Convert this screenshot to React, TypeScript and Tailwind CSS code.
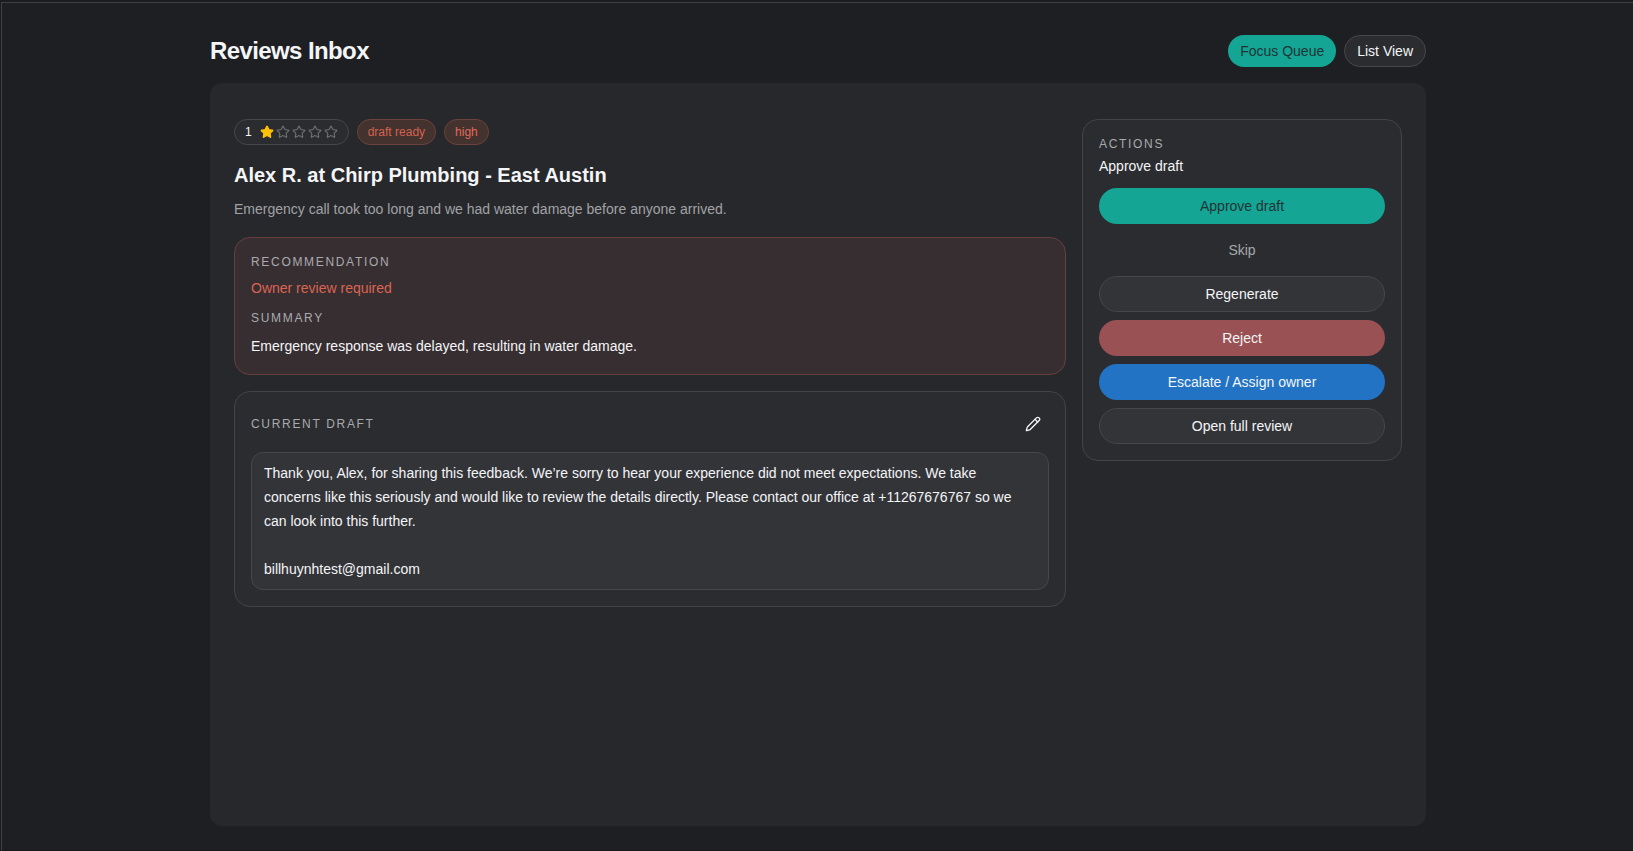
import type { ReactNode } from 'react';
import clsx from 'clsx';
import { Pencil, Star } from 'lucide-react';

const review = {
  rating: 1,
  status: 'draft ready',
  priority: 'high',
  title: 'Alex R. at Chirp Plumbing - East Austin',
  body: 'Emergency call took too long and we had water damage before anyone arrived.',
  recommendation: 'Owner review required',
  summary: 'Emergency response was delayed, resulting in water damage.',
  draft:
    'Thank you, Alex, for sharing this feedback. We’re sorry to hear your experience did not meet expectations. We take concerns like this seriously and would like to review the details directly. Please contact our office at +11267676767 so we can look into this further.\n\nbillhuynhtest@gmail.com'
};

const actions = [
  { label: 'Approve draft', className: 'bg-[#14a594] text-[#1f3437]' },
  { label: 'Skip', className: 'text-[#a7a8ac]' },
  { label: 'Regenerate', className: 'border border-[#46474b] bg-[#333438] text-[#f4f5f7]' },
  { label: 'Reject', className: 'bg-[#9a5153] text-[#f4f5f7]' },
  { label: 'Escalate / Assign owner', className: 'bg-[#2273c4] text-[#f4f5f7]' },
  { label: 'Open full review', className: 'border border-[#46474b] bg-[#333438] text-[#f4f5f7]' }
];

function Label({ children, className }: { children: ReactNode; className?: string }) {
  return (
    <h3 className={clsx('text-xs font-medium uppercase tracking-[0.14em] text-[#a9aaae]', className)}>
      {children}
    </h3>
  );
}

export default function App() {
  return (
    <div className="flex min-h-screen flex-col bg-[#1b1c1f] pt-0.5 pl-px font-['Liberation_Sans',Arial,sans-serif] text-sm text-[#f4f5f7]">
      <main className="flex flex-1 flex-col border-t border-b border-l border-t-[#3f4043] border-b-[#17181a] border-l-[#3f4043] bg-[#1e1f22] pl-px">
        <div className="mx-auto flex w-full max-w-7xl flex-1 flex-col px-8 pt-8 pb-6">
          <header className="mb-4 flex items-center justify-between">
            <h1 className="text-2xl font-bold tracking-tight">Reviews Inbox</h1>
            <div className="flex gap-2">
              <button className="h-8 rounded-full bg-[#14a594] px-3 font-medium text-[#1f3437]">
                Focus Queue
              </button>
              <button className="h-8 rounded-full border border-[#46474b] bg-[#2b2c2f] px-3 font-medium">
                List View
              </button>
            </div>
          </header>

          <section className="flex flex-1 items-start gap-4 rounded-xl bg-[#27282b] px-6 pt-9 pb-6">
            <div className="min-w-0 flex-1">
              <div className="flex gap-2 text-xs">
                <span className="flex items-center gap-2 rounded-full border border-[#46474b] bg-[#2b2c2f] px-2.5 py-1 font-medium">
                  {review.rating}
                  <span className="flex gap-0.5">
                    {[1, 2, 3, 4, 5].map((n) => (
                      <Star
                        key={n}
                        className={clsx(
                          'size-3.5',
                          n <= review.rating ? 'fill-[#ffc107] text-[#ffc107]' : 'text-[#6c6d71]'
                        )}
                      />
                    ))}
                  </span>
                </span>
                <span className="rounded-full border border-[#6d423c] bg-[#43322e] px-2.5 py-1 text-[#d5634f]">
                  {review.status}
                </span>
                <span className="rounded-full border border-[#6d423c] bg-[#43322e] px-2.5 py-1 font-medium text-[#e0695a]">
                  {review.priority}
                </span>
              </div>

              <h2 className="mt-4 text-xl font-bold">{review.title}</h2>
              <p className="mt-2 leading-6 text-[#a1a2a6]">{review.body}</p>

              <div className="mt-4 rounded-2xl border border-[#673f3e] bg-[#372e32] p-4">
                <Label>Recommendation</Label>
                <p className="mt-2 text-[#db6450]">{review.recommendation}</p>
                <Label className="mt-3">Summary</Label>
                <p className="mt-2 leading-6">{review.summary}</p>
              </div>

              <div className="mt-4 rounded-2xl border border-[#434448] bg-[#2b2c2f] p-4">
                <div className="flex items-center justify-between">
                  <Label>Current draft</Label>
                  <button className="flex size-8 items-center justify-center" aria-label="Edit draft">
                    <Pencil className="size-4" />
                  </button>
                </div>
                <p className="mt-3 rounded-xl border border-[#46474b] bg-[#333438] px-3 py-2 leading-6 whitespace-pre-wrap">
                  {review.draft}
                </p>
              </div>
            </div>

            <aside className="w-80 rounded-2xl border border-[#434448] bg-[#2b2c2f] p-4">
              <Label>Actions</Label>
              <p className="mt-1 font-medium">Approve draft</p>
              <div className="mt-3 flex flex-col gap-2">
                {actions.map((action) => (
                  <button
                    key={action.label}
                    className={clsx('h-9 rounded-full px-4 font-medium', action.className)}
                  >
                    {action.label}
                  </button>
                ))}
              </div>
            </aside>
          </section>
        </div>
      </main>
    </div>
  );
}
